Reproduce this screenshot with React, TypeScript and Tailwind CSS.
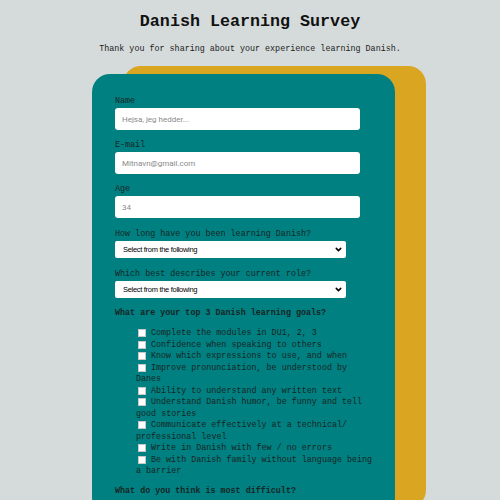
import React from 'react';
import { ChevronDown } from 'lucide-react';

const GOALS = [
  'Complete the modules in DU1, 2, 3',
  'Confidence when speaking to others',
  'Know which expressions to use, and when',
  'Improve pronunciation, be understood by Danes',
  'Ability to understand any written text',
  'Understand Danish humor, be funny and tell good stories',
  'Communicate effectively at a technical/ professional level',
  'Write in Danish with few / no errors',
  'Be with Danish family without language being a barrier',
];

function TextField({ label, placeholder }: { label: string; placeholder: string }) {
  return (
    <div className="mb-[10px]">
      <label className="mb-[2px] block text-[8.4px] leading-[10px]">{label}</label>
      <input
        type="text"
        placeholder={placeholder}
        className="block h-[22px] w-[245px] rounded-[3px] bg-white px-[7px] font-['Roboto',sans-serif] text-[8px] text-[#444] outline-none placeholder:text-[#8a8a8a]"
      />
    </div>
  );
}

function SelectField({ label }: { label: string }) {
  return (
    <div className="mb-[10px]">
      <label className="mb-[2px] block text-[8.4px] leading-[10px]">{label}</label>
      <div className="relative w-[231px]">
        <select className="block h-[17px] w-full appearance-none rounded-[2px] bg-white pl-[8px] font-['Liberation_Sans',sans-serif] text-[7.5px] tracking-[-0.3px] text-black outline-none">
          <option>Select from the following</option>
        </select>
        <ChevronDown
          className="pointer-events-none absolute right-[3px] top-[4px] h-[9px] w-[9px] text-black"
          strokeWidth={4}
        />
      </div>
    </div>
  );
}

export default function App() {
  return (
    <div className="min-h-screen bg-[#d5dbdb] pb-8 font-['Liberation_Mono',monospace] text-[#182626]">
      <h1 className="pt-[12px] text-center text-[16.7px] font-bold leading-[20px] text-[#111]">
        Danish Learning Survey
      </h1>
      <p className="mt-[12px] text-center text-[8.4px] leading-[10px] text-[#222]">
        Thank you for sharing about your experience learning Danish.
      </p>

      {/* Survey card */}
      <div className="ml-[92px] mt-[20px] w-[303px] rounded-[18px] bg-[#008080] pb-[20px] pl-[23px] pt-[22px] shadow-[31px_-8px_0_0_#daa520]">
        <TextField label="Name" placeholder="Hejsa, jeg hedder..." />
        <TextField label="E-mail" placeholder="Mitnavn@gmail.com" />
        <TextField label="Age" placeholder="34" />

        <div className="h-[1px]" />
        <SelectField label="How long have you been learning Danish?" />
        <div className="h-[1px]" />
        <SelectField label="Which best describes your current role?" />

        <p className="mt-[1px] text-[8.4px] font-bold leading-[10px]">What are your top 3 Danish learning goals?</p>
        <ul className="mt-[10px] w-[260px] pl-[21px] text-[8.4px] leading-[11.5px]">
          {GOALS.map((goal) => (
            <li key={goal}>
              <label>
                <input
                  type="checkbox"
                  className="ml-[2px] mr-[5px] mt-[1px] inline-block h-[8px] w-[8px] appearance-none border border-[#c8c8c8] bg-white align-top"
                />
                {goal}
              </label>
            </li>
          ))}
        </ul>

        <p className="mt-[8px] text-[8.4px] font-bold leading-[10px]">What do you think is most difficult?</p>
      </div>
    </div>
  );
}
